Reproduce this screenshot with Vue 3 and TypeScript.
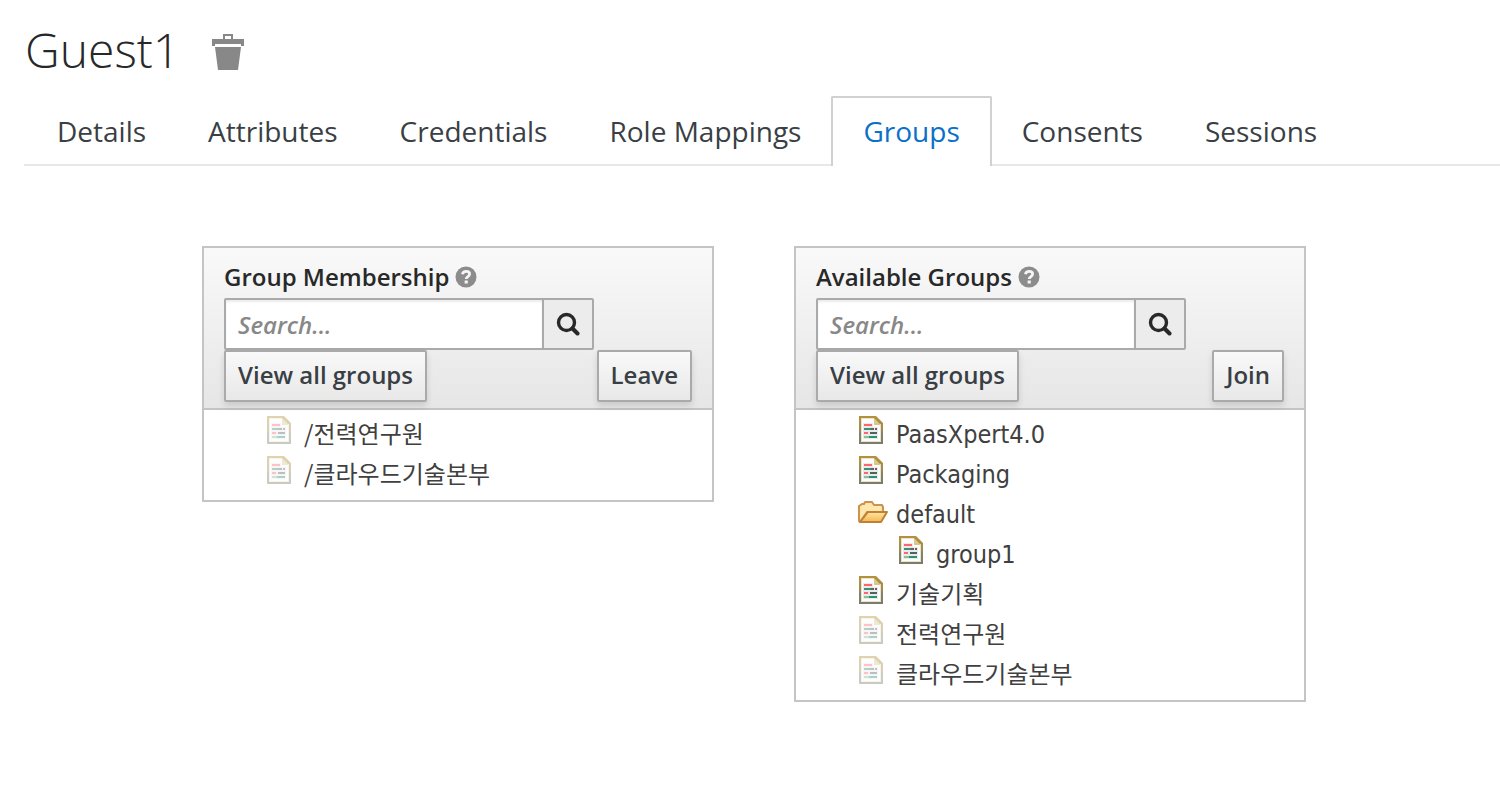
<script setup lang="ts">
import { ref } from 'vue'

interface GroupNode {
  name: string
  faded?: boolean
  children?: GroupNode[]
}

interface Panel {
  id: string
  title: string
  help: string
  action: string
  nodes: GroupNode[]
}

const tabs = ['Details', 'Attributes', 'Credentials', 'Role Mappings', 'Groups', 'Consents', 'Sessions']
const activeTab = 'Groups'
const queries = ref<string[]>(['', ''])

const panels: Panel[] = [
  {
    id: 'membership',
    title: 'Group Membership',
    help: 'Groups the user is a member of',
    action: 'Leave',
    nodes: [
      { name: '/전력연구원', faded: true },
      { name: '/클라우드기술본부', faded: true },
    ],
  },
  {
    id: 'available',
    title: 'Available Groups',
    help: 'Groups the user can join',
    action: 'Join',
    nodes: [
      { name: 'PaasXpert4.0' },
      { name: 'Packaging' },
      { name: 'default', children: [{ name: 'group1' }] },
      { name: '기술기획' },
      { name: '전력연구원', faded: true },
      { name: '클라우드기술본부', faded: true },
    ],
  },
]

const isKorean = (text: string): boolean => /[가-힣]/.test(text)
</script>

<template>
  <svg class="defs" aria-hidden="true">
    <defs>
      <linearGradient id="paper-edge" x1="0" y1="0" x2="0" y2="1">
        <stop offset="0" stop-color="#b5903c" />
        <stop offset="0.5" stop-color="#a08a50" />
        <stop offset="0.62" stop-color="#84816a" />
        <stop offset="1" stop-color="#7c7c66" />
      </linearGradient>
      <linearGradient id="folder-front" x1="0" y1="0" x2="0" y2="1">
        <stop offset="0" stop-color="#ffe7a6" />
        <stop offset="1" stop-color="#f5b64c" />
      </linearGradient>
      <symbol id="file" viewBox="0 0 32 32">
        <path d="M3 2h17l7 7v21H3z" fill="url(#paper-edge)" />
        <path d="M5 4h13v6h7v18H5z" fill="#e9e4d2" />
        <path d="M6 5h12v6h6v16H6z" fill="#fdfdfb" />
        <path d="M18 4l7 7h-7z" fill="#dcc888" />
        <path d="M7 9h10v4h5v12H7z" fill="#e6ecea" />
        <path d="M8 10h8v2H8z" fill="#ff6472" />
        <path d="M8 14h7v2H8z" fill="#3f8d74" />
        <path d="M15 14h3v2h-3zM19 14h2v2h-2z" fill="#6b5b5d" />
        <path d="M8 18h4v2H8z" fill="#ff6472" />
        <path d="M14 18h7v2h-7z" fill="#55605c" />
        <path d="M8 22h5v2H8z" fill="#8fbd96" />
        <path d="M13 22h8v2h-8z" fill="#318e73" />
      </symbol>
      <symbol id="folder" viewBox="0 0 32 32">
        <path d="M3 27V12l3-2h2l1-2h7l2 3h8l1 2v5H11L4 28z" fill="#ffe6ab" stroke="#cb9350" stroke-width="2" stroke-linejoin="round" />
        <path d="M4 28l8-10h19l-6 10z" fill="url(#folder-front)" stroke="#c08038" stroke-width="2" stroke-linejoin="round" />
      </symbol>
    </defs>
  </svg>

  <header class="heading">
    <h1>Guest1</h1>
    <button class="trash" type="button" aria-label="Delete user">
      <svg width="32" height="38" viewBox="0 0 32 38" aria-hidden="true">
        <path
          d="M11 1h10v5h11v7h-3v-2H3v2H0V6h11zM13 3v3h6V3zM3 14h26l-3 23H6z"
          fill="#888"
          fill-rule="evenodd"
        />
      </svg>
    </button>
  </header>

  <nav class="tabs">
    <a v-for="tab in tabs" :key="tab" href="#" :class="['tab', { active: tab === activeTab }]">{{ tab }}</a>
  </nav>

  <main class="panels">
    <section v-for="(panel, index) in panels" :key="panel.id" class="panel">
      <div class="panel-head">
        <div class="panel-title">
          <label :for="panel.id">{{ panel.title }}</label>
          <svg class="help" viewBox="0 0 22 22" role="img" :aria-label="panel.help">
            <circle cx="11" cy="11" r="10.5" fill="#8c8c8c" />
            <path d="M7.4 8.2C7.8 6.3 9.2 5.3 11.1 5.3c2 0 3.5 1.1 3.5 2.8 0 2.6-3.4 2.5-3.4 4.9" fill="none" stroke="#f5f5f5" stroke-width="2.8" />
            <path d="M9.6 14.5h3.2v3H9.6z" fill="#f5f5f5" />
          </svg>
        </div>
        <div class="search">
          <input :id="panel.id" v-model="queries[index]" type="text" placeholder="Search..." />
          <button type="button" aria-label="Search">
            <svg width="24" height="24" viewBox="0 0 24 24" fill="none" stroke="#282828" aria-hidden="true">
              <circle cx="10.5" cy="10.5" r="8" stroke-width="3.4" />
              <path d="M16.5 16.5l5 5" stroke-width="4" stroke-linecap="round" />
            </svg>
          </button>
        </div>
        <div class="actions">
          <button type="button">View all groups</button>
          <button type="button">{{ panel.action }}</button>
        </div>
      </div>

      <ul class="tree">
        <li v-for="node in panel.nodes" :key="node.name">
          <div class="row">
            <svg :class="['icon', { faded: node.faded }]" aria-hidden="true">
              <use :href="node.children ? '#folder' : '#file'" />
            </svg>
            <span :class="['name', { korean: isKorean(node.name) }]">{{ node.name }}</span>
          </div>
          <ul v-if="node.children">
            <li v-for="child in node.children" :key="child.name" class="row">
              <svg class="icon" aria-hidden="true"><use href="#file" /></svg>
              <span class="name">{{ child.name }}</span>
            </li>
          </ul>
        </li>
      </ul>
    </section>
  </main>
</template>

<style>
body {
  background: #fff;
  font-family: "Open Sans", "Noto Sans", sans-serif;
}
</style>

<style scoped>
.defs {
  position: absolute;
  width: 0;
  height: 0;
}

.heading {
  display: flex;
  align-items: center;
  gap: 32px;
  padding: 16px 25px 12px;
}

h1 {
  margin: 0;
  font-size: 48px;
  font-weight: 300;
  line-height: 68px;
  color: #282828;
}

button {
  box-sizing: border-box;
  margin: 0;
  font: inherit;
  cursor: pointer;
}

.trash {
  display: flex;
  padding: 4px 0 0;
  border: 0;
  background: none;
}

.tabs {
  display: flex;
  margin-left: 24px;
  padding-left: 1px;
  border-bottom: 2px solid #e8e8e8;
}

.tab {
  margin-bottom: -2px;
  padding: 0 30px 2px;
  border: 2px solid transparent;
  border-bottom: 0;
  border-radius: 2px 2px 0 0;
  font-size: 28px;
  line-height: 66px;
  white-space: nowrap;
  color: #393f44;
  text-decoration: none;
}

.tab + .tab {
  margin-left: -2px;
}

.tab.active {
  border-color: #d1d1d1;
  background: #fff;
  color: #0a70c8;
}

.panels {
  display: grid;
  grid-template-columns: 1fr 1fr;
  align-items: start;
  gap: 80px;
  margin: 80px 194px 0 202px;
}

.panel {
  border: 2px solid #c4c4c4;
}

.panel-head {
  padding: 10px 20px 6px;
  border-bottom: 2px solid #c4c4c4;
  background: linear-gradient(#f9f9f9, #e6e6e6);
  font-size: 24px;
  font-weight: 600;
}

.panel-title {
  display: flex;
  align-items: center;
  gap: 6px;
  padding-bottom: 2px;
  line-height: 38px;
  color: #282828;
}

.help {
  width: 22px;
  height: 22px;
}

.search {
  display: flex;
  max-width: 370px;
}

.search input {
  box-sizing: border-box;
  flex: 1;
  min-width: 0;
  height: 52px;
  margin: 0;
  padding: 0 12px;
  border: 2px solid #aaa;
  border-radius: 2px 0 0 2px;
  background: #fff;
  box-shadow: inset 0 2px 2px rgba(0, 0, 0, 0.08);
  font: inherit;
  color: #333;
}

.search input::placeholder {
  color: #888;
  font-style: italic;
  opacity: 1;
}

.search button {
  display: flex;
  align-items: center;
  justify-content: center;
  width: 52px;
  margin-left: -2px;
  padding: 0;
  border: 2px solid #aaa;
  border-radius: 0 2px 2px 0;
  background: #ececec;
}

.actions {
  display: flex;
  justify-content: space-between;
}

.actions button {
  height: 52px;
  padding: 0 12px 2px;
  border: 2px solid #aaa;
  border-radius: 2px;
  background: linear-gradient(#f9f9f9, #e8e8e8);
  box-shadow: 0 4px 6px rgba(0, 0, 0, 0.12);
  line-height: 46px;
  color: #393f44;
}

ul {
  margin: 0;
  padding: 0;
  list-style: none;
}

.tree {
  padding: 4px 20px 6px 60px;
  font-family: "DejaVu Sans Condensed", "DejaVu Sans", "Noto Sans CJK KR", sans-serif;
  font-size: 25px;
  color: #404040;
}

.tree ul {
  padding-left: 40px;
}

.row {
  display: flex;
  gap: 8px;
  height: 40px;
  white-space: nowrap;
}

.icon {
  flex: none;
  width: 32px;
  height: 32px;
}

.faded {
  opacity: 0.4;
}

.name {
  line-height: 42px;
}

.name.korean {
  font-family: "Noto Sans CJK KR", sans-serif;
  font-size: 24px;
  line-height: 38px;
}
</style>
